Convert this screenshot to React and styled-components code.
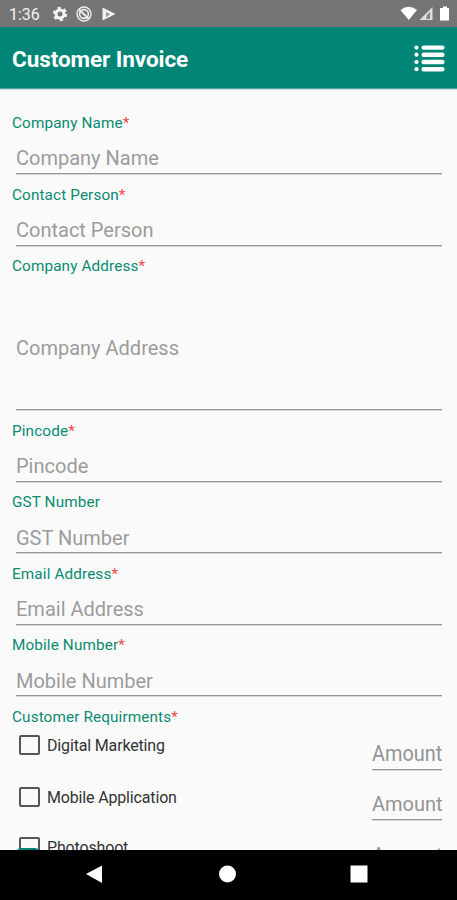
import React from "react";
import styled, { createGlobalStyle } from "styled-components";

const Global = createGlobalStyle`
  * { box-sizing: border-box; }
  body { margin: 0; background: #fafafa; font-family: Roboto, sans-serif; overflow: hidden; }
`;

const Screen = styled.div`
  display: flex;
  flex-direction: column;
  width: 457px;
  height: 900px;
  background: #fafafa;
`;

const StatusBar = styled.header`
  display: flex;
  flex: none;
  align-items: center;
  justify-content: space-between;
  height: 27px;
  padding: 1px 7px 0 9px;
  background: #757575;
  color: #f2f2f2;
`;

const Clock = styled.span`
  width: 44px;
  padding-top: 1px;
  font-size: 16px;
  line-height: 20px;
`;

const StatusGroup = styled.div`
  display: flex;
  align-items: center;
`;

const AppBar = styled.div`
  display: flex;
  flex: none;
  align-items: center;
  justify-content: space-between;
  height: 62px;
  padding: 2px 12px 0 12px;
  background: #018577;
  border-bottom: 1px solid #4aa79c;
  box-shadow: 0 1px 1px #d5dddd;
`;

const Title = styled.h1`
  margin: 0;
  color: #fff;
  font-size: 22.5px;
  font-weight: 700;
  line-height: 28px;
  letter-spacing: -0.07px;
`;

const Form = styled.main`
  flex: 1;
  min-height: 0;
  overflow: hidden;
  padding: 24px 15px 0 12px;
`;

const Field = styled.div`
  height: ${(p) => p.$height}px;
`;

const Label = styled.label`
  display: block;
  height: 20px;
  color: #0b8a72;
  font-size: 15.3px;
  line-height: 20px;
  letter-spacing: 0.12px;
  white-space: nowrap;
`;

const Required = styled.span`
  color: #f04a48;
`;

const Input = styled.div`
  display: flex;
  align-items: center;
  height: ${(p) => p.$height}px;
  margin-left: 4px;
  padding-top: ${(p) => p.$top}px;
  border-bottom: 1px solid #969696;
  box-shadow: 0 1px 0 #d8d8d8;
  color: #9c9c9c;
  font-size: 20px;
`;

const Requirements = styled.div`
  padding-top: 8px;
`;

const Requirement = styled.div`
  display: flex;
  justify-content: space-between;
  align-items: flex-start;
  height: ${(p) => p.$height}px;
`;

const Option = styled.div`
  display: flex;
  align-items: center;
  gap: 7px;
  height: 20px;
  padding-left: 7px;
  color: #333;
  font-size: 16px;
  letter-spacing: -0.16px;
`;

const Box = styled.span`
  position: relative;
  width: 21px;
  height: 20px;
  border: 2px solid #555;
  border-radius: 2px;

  &::after {
    content: "";
    display: ${(p) => (p.$accent ? "block" : "none")};
    position: absolute;
    top: 9px;
    left: -4px;
    width: 22px;
    height: 12px;
    border-radius: 4px 4px 0 0;
    background: #018577;
  }
`;

const Amount = styled.div`
  width: 70px;
  height: 28px;
  margin-top: ${(p) => p.$top}px;
  border-bottom: 1px solid #969696;
  box-shadow: 0 1px 0 #d8d8d8;
  color: #949494;
  line-height: ${(p) => p.$line}px;
  white-space: nowrap;
`;

const AmountText = styled.span`
  display: inline-block;
  font-size: ${(p) => p.$size}px;
  transform: scaleX(${(p) => p.$stretch});
  transform-origin: left;
`;

const NavBar = styled.nav`
  flex: none;
  height: 50px;
  background: #000;
`;

const fields = [
  { name: "Company Name", required: true, height: 72, input: 41, top: 10 },
  { name: "Contact Person", required: true, height: 71, input: 41, top: 10 },
  { name: "Company Address", required: true, height: 165, input: 134, top: 11 },
  { name: "Pincode", required: true, height: 71, input: 41, top: 10 },
  { name: "GST Number", height: 72, input: 41, top: 11 },
  { name: "Email Address", required: true, height: 71, input: 41, top: 10 },
  { name: "Mobile Number", required: true, height: 72, input: 41, top: 11 },
];

const requirements = [
  { name: "Digital Marketing", height: 52, top: 7, line: 23, size: 22, stretch: 0.905 },
  { name: "Mobile Application", height: 50, top: 5, line: 25, size: 20, stretch: 1 },
  { name: "Photoshoot", height: 50, top: 6, line: 25, size: 20, stretch: 1, accent: true },
];

export default function App() {
  return (
    <Screen>
      <Global />
      <StatusBar>
        <StatusGroup>
          <Clock>1:36</Clock>
          <svg width="66" height="18" viewBox="53 5 66 18" fill="none">
            <circle cx="60" cy="14" r="4" stroke="#f2f2f2" strokeWidth="3" />
            <circle cx="60" cy="14" r="6" stroke="#f2f2f2" strokeWidth="2.4" strokeDasharray="3.14 3.14" />
            <circle cx="84" cy="14" r="7" stroke="#eee" strokeWidth="1.4" />
            <circle cx="84" cy="14" r="4.4" stroke="#eee" strokeWidth="1.6" />
            <path d="M79 9.5l9.5 9" stroke="#eee" strokeWidth="1.8" />
            <path d="M102.5 7.5L115.5 14l-13 6.5z" fill="#f2f2f2" />
            <path d="M106 12l4 2-4 3.500z" fill="#999" />
          </svg>
        </StatusGroup>
        <svg width="50" height="18" viewBox="400 5 50 18">
          <path d="M400.5 10Q408.500 3.500 417 10L408.700 20z" fill="#fff" />
          <path d="M419.500 20L432.500 7v13z" fill="#ddd" />
          <path d="M426 19l1-4 3-3v7z" fill="#858585" />
          <path d="M441 8h2V6.500h4V8h2v12.500h-9V8z" fill="#fff" />
        </svg>
      </StatusBar>
      <AppBar>
        <Title>Customer Invoice</Title>
        <svg width="31" height="28" viewBox="0 0 31 28" fill="#fff">
          {[2.6, 9.7, 17, 24.2].map((y) => (
            <g key={y}>
              <circle cx="2.500" cy={y} r="2.100" />
              <rect x="7.500" y={y - 2.200} width="23" height="4.400" rx="2" />
            </g>
          ))}
        </svg>
      </AppBar>
      <Form>
        {fields.map((f) => (
          <Field key={f.name} $height={f.height}>
            <Label>
              {f.name}
              {f.required && <Required>*</Required>}
            </Label>
            <Input $height={f.input} $top={f.top}>{f.name}</Input>
          </Field>
        ))}
        <Label>
          Customer Requirments<Required>*</Required>
        </Label>
        <Requirements>
          {requirements.map((r) => (
            <Requirement key={r.name} $height={r.height}>
              <Option>
                <Box $accent={r.accent} />
                {r.name}
              </Option>
              <Amount $top={r.top} $line={r.line}>
                <AmountText $size={r.size} $stretch={r.stretch}>Amount</AmountText>
              </Amount>
            </Requirement>
          ))}
        </Requirements>
      </Form>
      <NavBar>
        <svg width="457" height="50" viewBox="0 0 457 50" fill="#fff">
          <path d="M86 24L102 15.500v17.500z" />
          <circle cx="227.500" cy="24" r="8.500" />
          <rect x="350.500" y="15.500" width="17" height="17" />
        </svg>
      </NavBar>
    </Screen>
  );
}
